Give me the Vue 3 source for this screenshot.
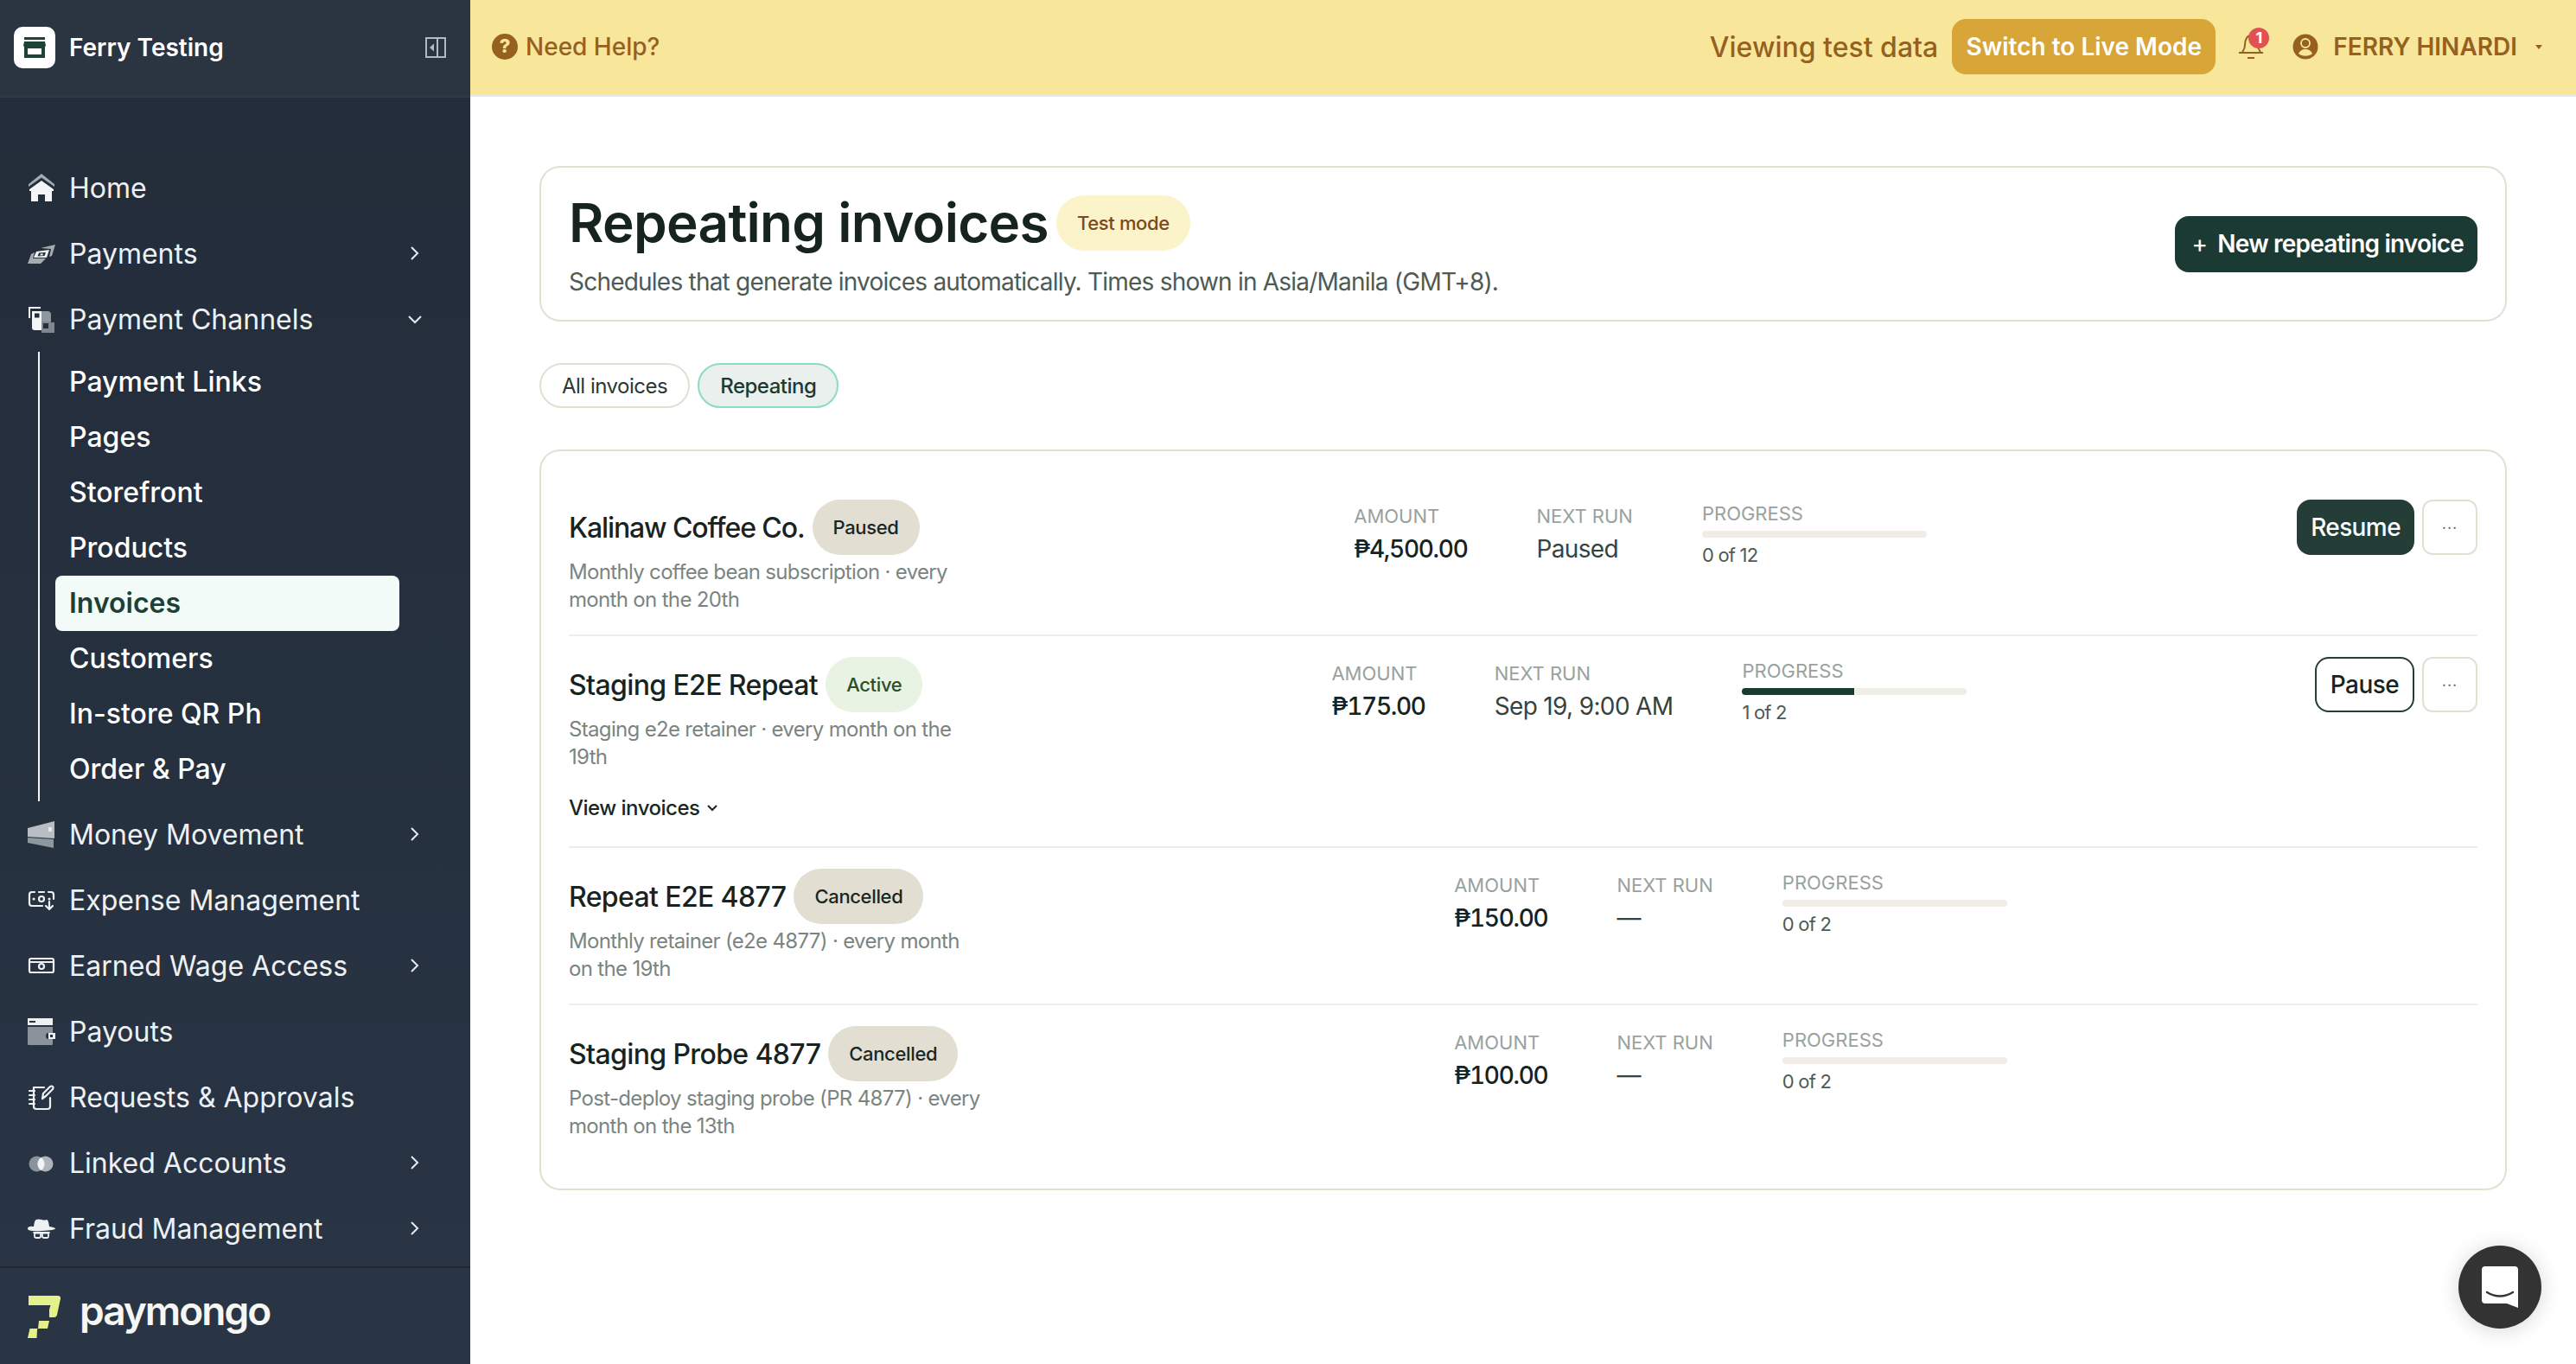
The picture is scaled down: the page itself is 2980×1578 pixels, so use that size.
<template>
  <div class="app">
    <aside class="sidebar">
      <div class="org">
        <div class="org-tile">
          <svg width="26" height="26" viewBox="0 0 26 26">
            <path d="M1 1h24v3H1z" fill="#1e4236" />
            <path fill-rule="evenodd" d="M1 6h24l1 5-1 1v13H1V12L0 11zM5 14v7h16v-7z" fill="#1e4236" />
          </svg>
        </div>
        <span class="org-name">Ferry Testing</span>
        <svg class="collapse" width="24" height="24" viewBox="0 0 24 24">
          <path d="M1 1h22v22H1zM14 1v22" fill="none" stroke="#b4bac0" stroke-width="2" />
          <path d="M10 7.500v9L5 12z" fill="#b4bac0" />
        </svg>
      </div>

      <nav class="nav">
        <template v-for="item in navItems" :key="item.label">
          <div class="nav-item">
            <svg class="nav-icon" width="32" height="32" viewBox="0 0 32 32">
              <path
                v-for="(p, i) in icons[item.icon]"
                :key="i"
                :d="p.d"
                :fill="p.fill || 'none'"
                :stroke="p.stroke || 'none'"
                :stroke-width="p.width || 0"
                fill-rule="evenodd"
                stroke-linecap="round"
                stroke-linejoin="round"
              />
            </svg>
            <span class="nav-label">{{ item.label }}</span>
            <svg v-if="item.arrow === 'right'" class="chev" width="16" height="18" viewBox="0 0 16 18">
              <path d="M4 2l7 7-7 7" fill="none" stroke="#e8ebee" stroke-width="2" />
            </svg>
            <svg v-if="item.arrow === 'down'" class="chev" width="16" height="18" viewBox="0 0 16 18">
              <path d="M1 6l7 7 7-7" fill="none" stroke="#e8ebee" stroke-width="2" />
            </svg>
          </div>
          <div v-if="item.children" class="subnav">
            <div
              v-for="child in item.children"
              :key="child"
              class="sub-item"
              :class="{ active: child === 'Invoices' }"
            >
              {{ child }}
            </div>
          </div>
        </template>
      </nav>

      <div class="brand">
        <svg width="38" height="49" viewBox="0 0 38 49">
          <path
            d="M1 0h34q3.500 0 3 3.500L34 22q-.700 3-3.500 3H25v-9l1.500-5H1zM13 29h12l-2 9H12q-1 0-1 1.500L10.500 49H0l2.500-11H12z"
            fill="#e4f08a"
          />
        </svg>
        <span class="brand-name">paymongo</span>
      </div>
    </aside>

    <div class="page">
      <header class="topbar">
        <div class="help">
          <svg width="30" height="30" viewBox="0 0 30 30">
            <circle cx="15" cy="15" r="15" fill="#96601f" />
            <text x="15" y="22" text-anchor="middle" class="help-mark">?</text>
          </svg>
          <span>Need Help?</span>
        </div>
        <div class="top-right">
          <span class="viewing">Viewing test data</span>
          <button class="live-btn">Switch to Live Mode</button>
          <div class="bell">
            <svg width="30" height="40" viewBox="0 0 30 40">
              <path d="M4 26c1.500-2 3-3 3-8 0-7 3-11 7-11s8 4 8 11c0 5 1.500 6 3 8M0 27h28M10 33h8" fill="none" stroke="#96601f" stroke-width="2" />
            </svg>
            <span class="bell-count">1</span>
          </div>
          <svg width="30" height="30" viewBox="0 0 30 30" class="avatar">
            <circle cx="15" cy="15" r="14.500" fill="#96601f" />
            <circle cx="15" cy="11" r="5" fill="#96601f" stroke="#f8e79a" stroke-width="1.800" />
            <path d="M7 23c2-4 5-5 8-5s6 1 8 5c-4 3.500-12 3.500-16 0z" fill="#f8e79a" />
          </svg>
          <span class="user">FERRY HINARDI</span>
          <span class="caret"></span>
        </div>
      </header>

      <main class="content">
        <section class="head-card">
          <div>
            <div class="title-row">
              <h1>Repeating invoices</h1>
              <span class="pill pill-test">Test mode</span>
            </div>
            <p class="subtitle">Schedules that generate invoices automatically. Times shown in Asia/Manila (GMT+8).</p>
          </div>
          <button class="new-btn"><span class="plus">+</span>New repeating invoice</button>
        </section>

        <div class="tabs">
          <button class="tab">All invoices</button>
          <button class="tab tab-on">Repeating</button>
        </div>

        <section class="list-card">
          <article v-for="row in rows" :key="row.name" class="row">
            <div class="row-main">
              <div class="name-line">
                <span class="name" :class="{ tight: row.tight }">{{ row.name }}</span>
                <span class="pill" :class="row.status === 'Active' ? 'pill-active' : 'pill-muted'">{{ row.status }}</span>
              </div>
              <p class="desc">{{ row.desc }}</p>
              <div v-if="row.expandable" class="view-link">
                View invoices
                <svg width="14" height="10" viewBox="0 0 14 10"><path d="M2 2l5 5 5-5" fill="none" stroke="#1a2622" stroke-width="2" /></svg>
              </div>
            </div>

            <div class="stats">
              <div class="stat">
                <span class="stat-label">AMOUNT</span>
                <span class="stat-amount">{{ row.amount }}</span>
              </div>
              <div class="stat">
                <span class="stat-label">NEXT RUN</span>
                <span class="stat-value">{{ row.next }}</span>
              </div>
              <div class="stat-progress">
                <span class="stat-label">PROGRESS</span>
                <div class="bar"><div class="bar-fill" :style="{ width: row.progress + '%' }"></div></div>
                <span class="progress-count">{{ row.count }}</span>
              </div>
            </div>

            <div v-if="row.action" class="actions">
              <button class="act" :class="row.action === 'Resume' ? 'act-solid' : 'act-line'">{{ row.action }}</button>
              <button class="more">···</button>
            </div>
            <div v-else></div>
          </article>
        </section>
      </main>
    </div>

    <div class="chat">
      <svg width="42" height="48" viewBox="0 0 42 48">
        <path d="M4 0h34q4 0 4 4v44l-13-5H4q-4 0-4-4V4q0-4 4-4z" fill="#fff" />
        <path d="M6 30q15 9 30 0" fill="none" stroke="#333" stroke-width="2.500" stroke-linecap="round" />
      </svg>
    </div>
  </div>
</template>

<script setup>
const icons = {
  home: [
    { d: 'M16 0l15 12v3L16 4.500 1 15v-3z', fill: '#a3a9af' },
    { d: 'M16 8l14 10v2h-2v12h-8v-8h-8v8H4V20H2v-2z', fill: '#f2f4f5' }
  ],
  payments: [
    { d: 'M15 10L32 6l-4 13-3 1 2-9z', fill: '#a6abb0' },
    { d: 'M0 28l4-11 4-2-2 7h15l-6 6z', fill: '#a6abb0' },
    { d: 'M10 14l15-2-3 9H7zM13 15.500l-1.500 4 8-.5 1.500-4z', fill: '#eef0f2' },
    { d: 'M15 16.500h3l-.7 2h-3z', fill: '#eef0f2' }
  ],
  channels: [
    { d: 'M1 2h14v2H3v11H1z', fill: '#eef0f2' },
    { d: 'M5 7h11v22H8q-3 0-3-3zM8 9.500v5h5.500v-5z', fill: '#f2f4f5' },
    { d: 'M16 7h7q4 0 4 4v8H16z', fill: '#8f979e' },
    { d: 'M16 19h11v1h4v13H18q-2 0-2-3zM18 21v6h6v-6z', fill: '#7f878f' }
  ],
  money: [
    { d: 'M0 9L31 1v20L0 19z', fill: '#b7bdc2' },
    { d: 'M0 20l30 2v10L0 26z', fill: '#8f979e' },
    { d: 'M24 8h4v5h-4z', fill: '#e4e7e9' }
  ],
  expense: [
    { d: 'M8 7h-3q-3 0-3 3v10q0 3 3 3h12M24 7h3q3 0 3 3v5M13 7h6', stroke: '#eef0f2', width: 2.2 },
    { d: 'M7 15h.1M25 15h.1', stroke: '#eef0f2', width: 3 },
    { d: 'M13 15a3 3 0 1 0 6 0a3 3 0 1 0 -6 0', stroke: '#eef0f2', width: 2.2 },
    { d: 'M25 18v9M21 23l4 4 4-4', stroke: '#eef0f2', width: 2.2 }
  ],
  wage: [
    { d: 'M4 8h24q2 0 2 2v12q0 2-2 2H4q-2 0-2-2V10q0-2 2-2zM3 12h26', stroke: '#eef0f2', width: 2.2 },
    { d: 'M13 17a3 3 0 1 0 6 0a3 3 0 1 0 -6 0', stroke: '#eef0f2', width: 2.2 }
  ],
  payouts: [
    { d: 'M0 1h29v8H0zM2 4v2h7V4z', fill: '#eef0f2' },
    { d: 'M0 11h29v7h-5q-3 0-3 3.500t3 3.500h5v6q0 1-1 1H1q-1 0-1-1z', fill: '#8a939b' },
    { d: 'M24 18h8v7h-8zM26 20v3h3v-3z', fill: '#eef0f2' }
  ],
  requests: [
    { d: 'M7 5h12M26 17v10q0 3-3 3H10q-3 0-3-3V5', stroke: '#eef0f2', width: 2.2 },
    { d: 'M2 9h6M2 14h6M2 19h6M2 24h6', stroke: '#eef0f2', width: 2.2 },
    { d: 'M17 18l1-6 8-8q2-1 3 0t0 3l-8 8z', stroke: '#eef0f2', width: 2.2 }
  ],
  linked: [
    { d: 'M10.500 8.500a9 9 0 1 0 0 18 9 9 0 1 0 0-18z', fill: '#8a939b' },
    { d: 'M20.500 8.500a9 9 0 1 0 0 18 9 9 0 1 0 0-18z', fill: '#aeb4ba' },
    { d: 'M15.500 10q4 3 4 7.500t-4 7.500q-4-3-4-7.500t4-7.500z', fill: '#f2f4f5' }
  ],
  fraud: [
    { d: 'M10 6q2-1 6 0t6 0q2 0 3 8 7 1 7 2.500T16 19 0 16.500 7 14q1-8 3-8z', fill: '#eef0f2' },
    { d: 'M7 21h18M8 21.500h7v4q0 1.500-2 1.500h-3q-2 0-2-1.500zM17 21.500h7v4q0 1.500-2 1.500h-3q-2 0-2-1.500z', stroke: '#eef0f2', width: 1.8 }
  ]
}

const navItems = [
  { label: 'Home', icon: 'home' },
  { label: 'Payments', icon: 'payments', arrow: 'right' },
  {
    label: 'Payment Channels',
    icon: 'channels',
    arrow: 'down',
    children: ['Payment Links', 'Pages', 'Storefront', 'Products', 'Invoices', 'Customers', 'In-store QR Ph', 'Order & Pay']
  },
  { label: 'Money Movement', icon: 'money', arrow: 'right' },
  { label: 'Expense Management', icon: 'expense' },
  { label: 'Earned Wage Access', icon: 'wage', arrow: 'right' },
  { label: 'Payouts', icon: 'payouts' },
  { label: 'Requests & Approvals', icon: 'requests' },
  { label: 'Linked Accounts', icon: 'linked', arrow: 'right' },
  { label: 'Fraud Management', icon: 'fraud', arrow: 'right' }
]

const rows = [
  {
    name: 'Kalinaw Coffee Co.',
    tight: true,
    status: 'Paused',
    desc: 'Monthly coffee bean subscription · every month on the 20th',
    amount: '₱4,500.00',
    next: 'Paused',
    progress: 0,
    count: '0 of 12',
    action: 'Resume'
  },
  {
    name: 'Staging E2E Repeat',
    status: 'Active',
    desc: 'Staging e2e retainer · every month on the 19th',
    amount: '₱175.00',
    next: 'Sep 19, 9:00 AM',
    progress: 50,
    count: '1 of 2',
    action: 'Pause',
    expandable: true
  },
  {
    name: 'Repeat E2E 4877',
    status: 'Cancelled',
    desc: 'Monthly retainer (e2e 4877) · every month on the 19th',
    amount: '₱150.00',
    next: '—',
    progress: 0,
    count: '0 of 2'
  },
  {
    name: 'Staging Probe 4877',
    status: 'Cancelled',
    desc: 'Post-deploy staging probe (PR 4877) · every month on the 13th',
    amount: '₱100.00',
    next: '—',
    progress: 0,
    count: '0 of 2'
  }
]
</script>

<style scoped>
.app {
  display: flex;
  height: 1578px;
  overflow: hidden;
  background: #fff;
  font-family: Inter, sans-serif;
  color: #1a2622;
}

button {
  font-family: inherit;
  cursor: pointer;
}

/* Sidebar */
.sidebar {
  width: 544px;
  flex-shrink: 0;
  display: flex;
  flex-direction: column;
  background: linear-gradient(180deg, #232c39 0%, #263140 60%, #293545 100%);
}

.org {
  height: 113px;
  box-sizing: border-box;
  padding: 0 28px 2px 16px;
  display: flex;
  align-items: center;
  background: #2b3441;
  border-bottom: 2px solid #2f3946;
}

.org-tile {
  width: 48px;
  height: 48px;
  border-radius: 10px;
  background: #fff;
  display: flex;
  align-items: center;
  justify-content: center;
}

.org-name {
  margin-left: 16px;
  font-size: 28px;
  font-weight: 600;
  color: #fff;
}

.collapse {
  margin-left: auto;
}

.nav {
  flex: 1;
  padding-top: 66px;
}

.nav-item {
  height: 76px;
  padding: 0 56px 0 32px;
  display: flex;
  align-items: center;
  gap: 16px;
}

.nav-label {
  font-size: 32px;
  color: #eef1f3;
}

.chev {
  margin-left: auto;
}

.subnav {
  margin: 0 0 0 44px;
  padding: 3px 0 5px 18px;
  width: 398px;
  border-left: 2px solid #f2f4f5;
}

.sub-item {
  height: 64px;
  line-height: 64px;
  padding-left: 16px;
  border-radius: 8px;
  font-size: 32px;
  font-weight: 500;
  color: #fff;
}

.sub-item.active {
  background: #f2fbf8;
  color: #1d4034;
  font-weight: 600;
}

.brand {
  height: 113px;
  box-sizing: border-box;
  border-top: 2px solid #232a34;
  padding: 32px 0 0 32px;
  display: flex;
  gap: 22px;
  background: #293545;
}

.brand-name {
  font-size: 46px;
  font-weight: 600;
  line-height: 35px;
  color: #f6f7f4;
  letter-spacing: -2px;
}

/* Top bar */
.page {
  flex: 1;
  min-width: 0;
  display: flex;
  flex-direction: column;
}

.topbar {
  height: 112px;
  box-sizing: border-box;
  flex-shrink: 0;
  display: flex;
  align-items: center;
  justify-content: space-between;
  padding: 0 39px 2px 25px;
  background: #f8e79a;
  border-bottom: 2px solid #e6e8ec;
  color: #96601f;
}

.help {
  display: flex;
  align-items: center;
  gap: 9px;
  font-size: 28px;
  font-weight: 500;
}

.help-mark {
  font-size: 22px;
  font-weight: 800;
  fill: #f8e79a;
}

.top-right {
  display: flex;
  align-items: center;
}

.viewing {
  font-size: 32px;
  font-weight: 500;
  margin-right: 16px;
}

.live-btn {
  height: 64px;
  width: 305px;
  border: none;
  border-radius: 16px;
  background: #d8a538;
  color: #fff;
  font-size: 28px;
  font-weight: 600;
  padding: 0;
}

.bell {
  position: relative;
  width: 30px;
  height: 40px;
  margin-left: 27px;
}

.bell-count {
  position: absolute;
  left: 11px;
  top: -2px;
  width: 24px;
  height: 24px;
  border-radius: 50%;
  background: #e05252;
  color: #fff;
  font-size: 18px;
  font-weight: 700;
  line-height: 24px;
  text-align: center;
}

.avatar {
  margin-left: 32px;
}

.user {
  margin-left: 17px;
  font-size: 28px;
  font-weight: 600;
}

.caret {
  margin-left: 21px;
  border-left: 4px solid transparent;
  border-right: 4px solid transparent;
  border-top: 5px solid #96601f;
}

/* Content */
.content {
  padding: 80px 80px 0;
}

.head-card {
  height: 180px;
  box-sizing: border-box;
  padding: 32px 32px 24px;
  display: flex;
  align-items: center;
  justify-content: space-between;
  border: 2px solid #e3dfd3;
  border-radius: 24px;
}

.title-row {
  display: flex;
  align-items: center;
  gap: 9px;
}

h1 {
  margin: 0;
  font-size: 62px;
  line-height: 64px;
  font-weight: 600;
  letter-spacing: -0.700px;
  color: #17231f;
}

.subtitle {
  margin: 16px 0 0;
  font-size: 28px;
  line-height: 40px;
  letter-spacing: -0.780px;
  color: #4d5a55;
}

.pill {
  height: 64px;
  padding: 0 24px;
  display: inline-flex;
  align-items: center;
  border-radius: 32px;
  font-size: 22px;
  font-weight: 500;
  letter-spacing: -0.350px;
  white-space: nowrap;
}

.pill-test {
  background: #fbf3c9;
  color: #7a4a1a;
}

.pill-muted {
  background: #e2ded2;
  color: #1a2622;
}

.pill-active {
  background: #e8f3e4;
  color: #2f4f2a;
}

.new-btn {
  height: 65px;
  margin-bottom: 8px;
  padding: 0 16px 0 20px;
  border: none;
  border-radius: 16px;
  background: #1c3a34;
  color: #fff;
  font-size: 28px;
  font-weight: 600;
  letter-spacing: -0.800px;
}

.plus {
  margin-right: 12px;
  font-weight: 400;
}

.tabs {
  display: flex;
  gap: 9px;
  margin: 48px 0;
}

.tab {
  height: 52px;
  padding: 0 24px;
  border: 2px solid #e3dfd3;
  border-radius: 26px;
  background: #fff;
  color: #2b3833;
  font-size: 24px;
  letter-spacing: -0.500px;
}

.tab-on {
  border-color: #8cdcc0;
  background: #e9f0ed;
  color: #1c3a34;
  font-weight: 500;
}

.list-card {
  padding: 32px;
  border: 2px solid #e3dfd3;
  border-radius: 24px;
}

.row {
  display: flex;
  justify-content: space-between;
  align-items: flex-start;
  padding: 24px 0;
  border-bottom: 2px solid #f0ece6;
}

.row:last-child {
  border-bottom: none;
}

.row-main {
  width: 480px;
  flex-shrink: 0;
}

.name-line {
  display: flex;
  align-items: center;
  gap: 9px;
  white-space: nowrap;
}

.name {
  font-size: 32px;
  font-weight: 500;
  letter-spacing: -0.620px;
  color: #17231f;
}

.name.tight {
  letter-spacing: -1.100px;
}

.desc {
  margin: 4px 0 0;
  font-size: 24px;
  line-height: 32px;
  letter-spacing: -0.670px;
  color: #7a8581;
}

.view-link {
  display: flex;
  align-items: center;
  gap: 8px;
  margin-top: 27px;
  padding-bottom: 4px;
  font-size: 24px;
  line-height: 32px;
  font-weight: 500;
  letter-spacing: -0.500px;
  color: #1a2622;
}

.stats {
  display: flex;
  align-items: center;
  gap: 80px;
}

.stat,
.stat-progress {
  display: flex;
  flex-direction: column;
}

.stat-label {
  font-size: 22px;
  line-height: 32px;
  color: #98a29e;
}

.stat-amount,
.stat-value {
  margin-top: 2px;
  font-size: 28px;
  line-height: 40px;
  white-space: nowrap;
}

.stat-amount {
  font-weight: 500;
  font-variant-numeric: tabular-nums;
  letter-spacing: -1.300px;
  color: #17231f;
}

.stat-value {
  letter-spacing: -0.650px;
  color: #36423e;
}

.stat-progress {
  width: 260px;
}

.bar {
  height: 8px;
  margin: 4px 0;
  border-radius: 4px;
  overflow: hidden;
  background: #f0ece6;
}

.bar-fill {
  height: 100%;
  background: #1c3a34;
}

.progress-count {
  font-size: 22px;
  line-height: 32px;
  letter-spacing: -0.800px;
  color: #4d5a55;
}

.actions {
  display: flex;
  gap: 9px;
}

.act {
  height: 64px;
  padding: 0 16px;
  border-radius: 16px;
  font-size: 28px;
  font-weight: 500;
  letter-spacing: -0.600px;
}

.act-solid {
  border: none;
  background: #243d36;
  color: #fff;
}

.act-line {
  border: 2px solid #243d36;
  background: #fff;
  color: #17231f;
}

.more {
  width: 64px;
  height: 64px;
  padding: 0;
  border: 2px solid #e3dfd3;
  border-radius: 12px;
  background: #fff;
  color: #5f6a66;
  font-size: 18px;
  letter-spacing: 1px;
}

.chat {
  position: absolute;
  left: 2844px;
  top: 1441px;
  width: 96px;
  height: 96px;
  border-radius: 50%;
  background: #333;
  display: flex;
  align-items: center;
  justify-content: center;
  box-shadow: 0 2px 24px rgba(0, 0, 0, 0.16);
}
</style>

<style>
body {
  margin: 0;
}
</style>
